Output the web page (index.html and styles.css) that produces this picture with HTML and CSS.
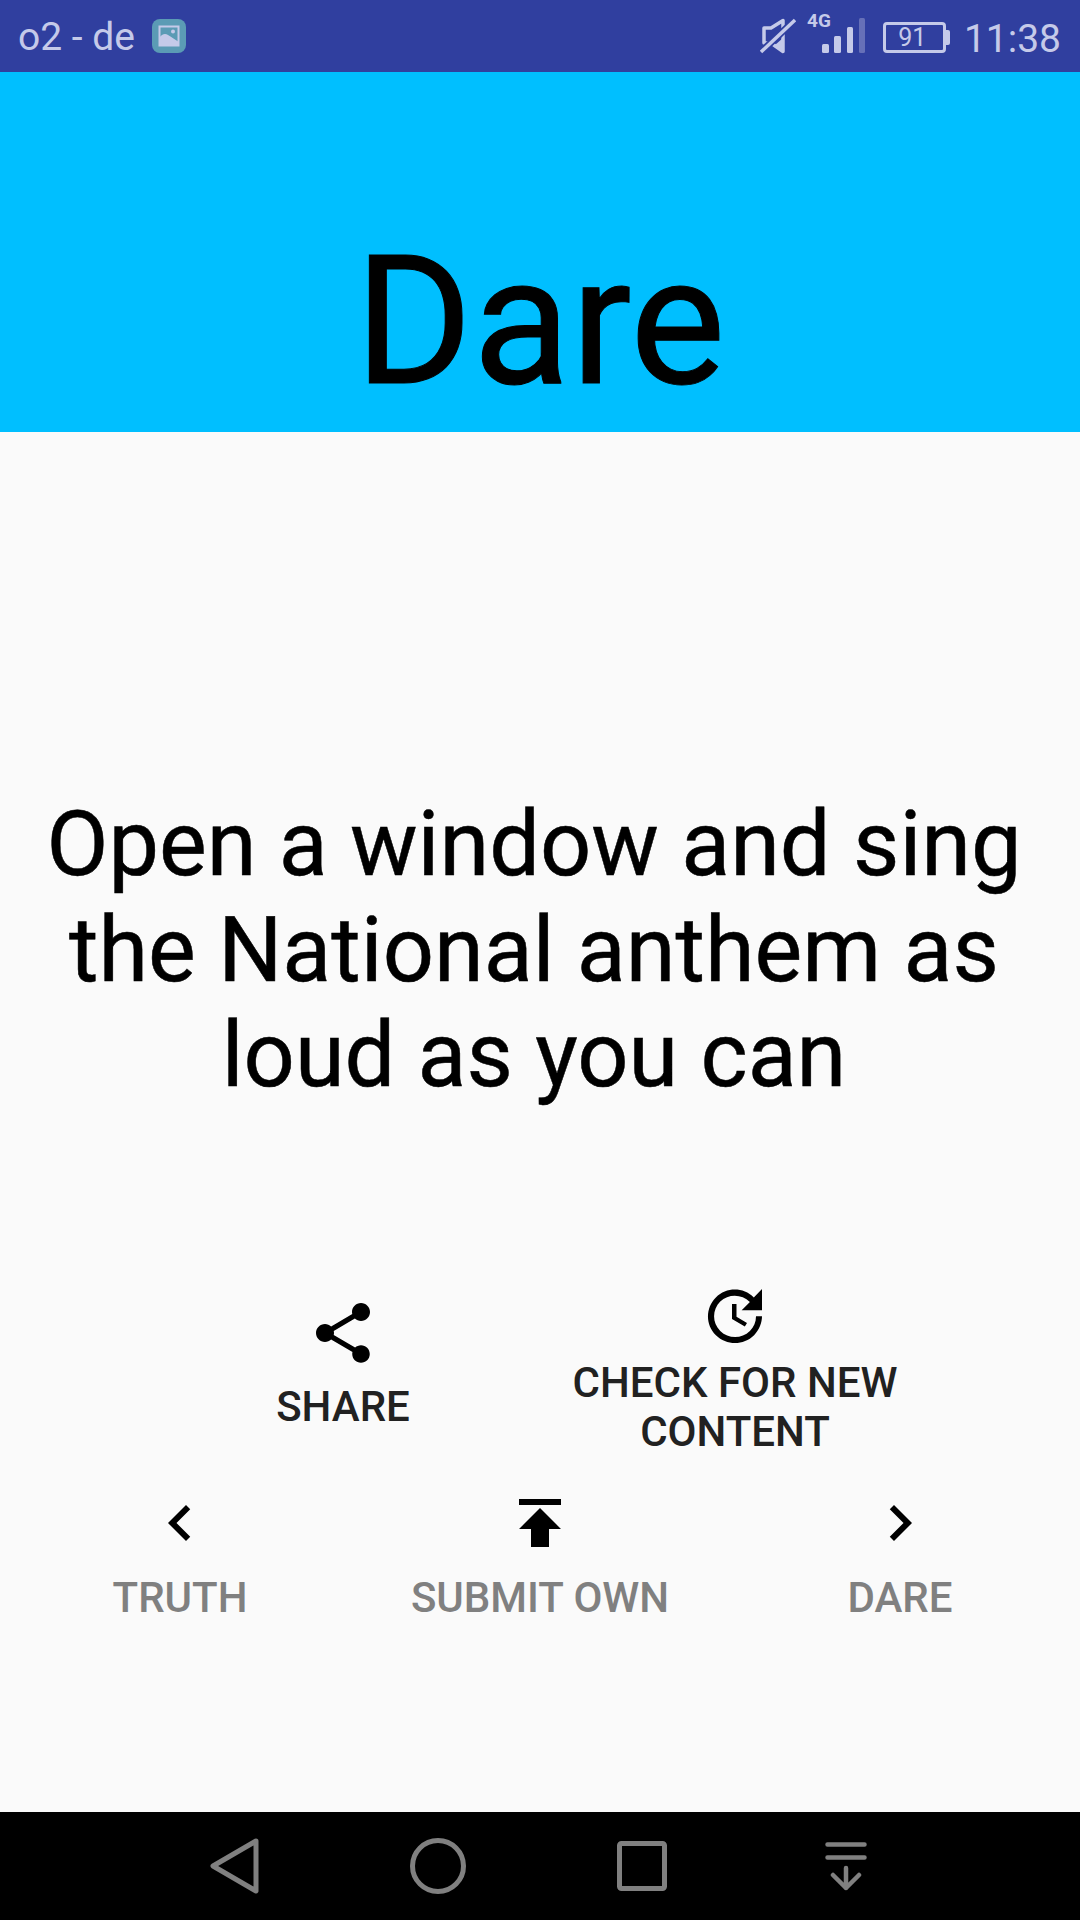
FILE: index.html
```html
<!DOCTYPE html>
<html lang="en">
<head>
  <meta charset="UTF-8" />
  <meta name="viewport" content="width=device-width, initial-scale=1.0"/>
  <title>Dare</title>
  <link rel="stylesheet" href="styles.css">
</head>
<body>
  <div class="status-bar">
    <div class="status-left">
      <span class="carrier">o2 - de</span>
      <svg class="gallery-icon" viewBox="0 0 34 34" width="34" height="34">
        <rect width="34" height="34" rx="8" fill="#5b9bb5"/>
        <rect x="7.5" y="7.5" width="19" height="19" fill="none" stroke="#c5cae9" stroke-width="2"/>
        <path d="M7 27v-8c3-4 6-5 9-3 4 2 7 5 11 7v4z" fill="#c5cae9"/>
        <circle cx="21" cy="12.5" r="2" fill="#c5cae9"/>
      </svg>
    </div>
    <div class="status-right">
      <svg class="mute-icon" viewBox="0 0 36 36" width="36" height="36">
        <path d="M4 10h7L23 2.5v31L11 25H4z" fill="none" stroke="#c5cae9" stroke-width="3.5" stroke-linejoin="round"/>
        <path d="M15 27l8 6V20z" fill="#c5cae9"/>
        <path d="M1 34L35 2" stroke="#303f9f" stroke-width="7"/>
        <path d="M1 34L35 2" stroke="#c5cae9" stroke-width="3.5"/>
      </svg>
      <svg class="signal-icon" viewBox="0 0 60 40" width="60" height="40">
        <text class="network-type" x="0" y="11">4G</text>
        <rect x="15" y="28" width="7" height="9" rx="1.5" fill="#c5cae9"/>
        <rect x="27" y="20" width="7" height="17" rx="1.5" fill="#c5cae9"/>
        <rect x="40" y="11" width="6" height="26" rx="1.5" fill="#c5cae9"/>
        <rect x="52" y="2" width="6" height="35" rx="1.5" fill="#6670b8"/>
      </svg>
      <div class="battery">
        <div class="battery-body">91</div>
        <div class="battery-nub"></div>
      </div>
      <span class="clock">11:38</span>
    </div>
  </div>

  <div class="header">
    <h1>Dare</h1>
  </div>

  <div class="content">
    <p class="message">Open a window and sing the National anthem as loud as you can</p>

    <div class="actions-top">
      <div class="action share">
        <svg class="icon" viewBox="0 0 24 24"><path d="M18 16.08c-.76 0-1.44.3-1.96.77L8.91 12.7c.05-.23.09-.46.09-.7s-.04-.47-.09-.7l7.05-4.11c.54.5 1.25.81 2.04.81 1.66 0 3-1.34 3-3s-1.34-3-3-3-3 1.34-3 3c0 .24.04.47.09.7L8.04 9.81C7.5 9.31 6.79 9 6 9c-1.66 0-3 1.34-3 3s1.34 3 3 3c.79 0 1.5-.31 2.04-.81l7.12 4.16c-.05.21-.08.43-.08.65 0 1.61 1.31 2.92 2.92 2.92 1.61 0 2.92-1.31 2.92-2.92s-1.31-2.92-2.92-2.92z"/></svg>
        <span class="action-label">SHARE</span>
      </div>
      <div class="action check">
        <svg class="icon" viewBox="0 0 24 24"><path d="M21 10.12h-6.78l2.74-2.82c-2.73-2.7-7.15-2.8-9.88-.1-2.73 2.71-2.73 7.08 0 9.79s7.15 2.71 9.88 0C18.32 15.65 19 14.08 19 12.1h2c0 1.98-.88 4.55-2.64 6.29-3.51 3.48-9.21 3.48-12.72 0-3.5-3.47-3.53-9.11-.02-12.58s9.14-3.47 12.65 0L21 3v7.12zM12.5 8v4.25l3.5 2.08-.72 1.21L11 13V8h1.5z"/></svg>
        <span class="action-label">CHECK FOR NEW<br>CONTENT</span>
      </div>
    </div>

    <div class="actions-bottom">
      <div class="action disabled">
        <svg class="icon" viewBox="0 0 24 24"><path d="M15.41 7.41L14 6l-6 6 6 6 1.41-1.41L10.83 12z"/></svg>
        <span class="action-label">TRUTH</span>
      </div>
      <div class="action disabled">
        <svg class="icon" viewBox="0 0 24 24"><path d="M5 4v2h14V4H5zm0 10h4v6h6v-6h4l-7-7-7 7z"/></svg>
        <span class="action-label">SUBMIT OWN</span>
      </div>
      <div class="action disabled">
        <svg class="icon" viewBox="0 0 24 24"><path d="M10 6L8.59 7.41 13.17 12l-4.58 4.59L10 18l6-6z"/></svg>
        <span class="action-label">DARE</span>
      </div>
    </div>
  </div>

  <div class="nav-bar">
    <svg viewBox="0 0 50 56" width="50" height="56">
      <path d="M46 3L3 28l43 25z" fill="none" stroke="#808080" stroke-width="5" stroke-linejoin="round"/>
    </svg>
    <svg viewBox="0 0 56 56" width="56" height="56">
      <circle cx="28" cy="28" r="25.5" fill="none" stroke="#808080" stroke-width="5"/>
    </svg>
    <svg class="nav-square" viewBox="0 0 50 50" width="50" height="50">
      <rect x="2.5" y="2.5" width="45" height="45" rx="2" fill="none" stroke="#808080" stroke-width="5"/>
    </svg>
    <svg class="nav-menu" viewBox="0 0 42 50" width="42" height="50">
      <path d="M2.5 3.5h37M2.5 16.5h37M21 27v20M8 34l13 13 13-13" fill="none" stroke="#808080" stroke-width="4.5" stroke-linecap="round" stroke-linejoin="round"/>
    </svg>
  </div>
</body>
</html>
```

FILE: styles.css
```css
* {
  box-sizing: border-box;
}

body {
  font-family: Roboto, sans-serif;
  background-color: #fafafa;
  margin: 0;
  width: 1080px;
  height: 1920px;
  display: flex;
  flex-direction: column;
  overflow: hidden;
}

.status-bar {
  height: 72px;
  background-color: #303f9f;
  color: #c5cae9;
  display: flex;
  justify-content: space-between;
  align-items: center;
  padding: 0 19px 0 18px;
}

.status-left,
.status-right {
  display: flex;
  align-items: center;
}

.carrier {
  font-size: 39px;
  margin-top: 2px;
}

.gallery-icon {
  margin-left: 17px;
}

.network-type {
  font-family: Roboto, sans-serif;
  font-size: 19px;
  font-weight: 700;
  fill: #c5cae9;
}

.mute-icon {
  margin-right: 11px;
}

.signal-icon {
  margin-right: 16px;
  overflow: visible;
}

.battery {
  display: flex;
  align-items: center;
  margin-top: 3px;
  margin-right: 14px;
}

.battery-body {
  width: 63px;
  height: 31px;
  border: 3px solid #c5cae9;
  border-radius: 4px;
  padding-right: 4px;
  font-size: 25px;
  line-height: 25px;
  text-align: center;
}

.battery-nub {
  width: 4px;
  height: 15px;
  background-color: #c5cae9;
  border-radius: 0 2px 2px 0;
}

.clock {
  font-size: 39px;
  margin-top: 6px;
}

.header {
  height: 360px;
  background-color: #00bfff;
  display: flex;
  justify-content: center;
  align-items: flex-end;
  padding-bottom: 5px;
}

h1 {
  margin: 0;
  font-size: 180px;
  font-weight: 400;
  line-height: 211px;
  color: #000;
  -webkit-text-stroke: 1px #000;
}

.content {
  flex: 1;
  display: flex;
  flex-direction: column;
}

.message {
  margin: 360px 0 0;
  padding: 0 36px 0 24px;
  font-size: 90px;
  line-height: 105.5px;
  text-align: center;
  color: #000;
  -webkit-text-stroke: 0.5px #000;
}

.actions-top {
  display: flex;
  justify-content: center;
  align-items: flex-start;
  margin-top: 171.5px;
}

.actions-bottom {
  display: grid;
  grid-template-columns: repeat(3, 1fr);
  margin-top: 31px;
}

.action {
  display: flex;
  flex-direction: column;
  align-items: center;
  text-align: center;
  color: #212121;
}

.action.disabled {
  color: #808080;
}

.icon {
  width: 72px;
  height: 72px;
  fill: #000;
}

.action-label {
  margin-top: 14px;
  font-size: 42px;
  font-weight: 500;
  line-height: 49px;
}

.action.share {
  width: 390px;
  margin-top: 17px;
}

.action.share .action-label {
  margin-top: 13px;
}

.action.check {
  width: 394px;
}

.action.check .action-label {
  margin-top: 6px;
}

.nav-bar {
  height: 108px;
  background-color: #000;
  display: flex;
  align-items: center;
  gap: 150px;
  padding-left: 210px;
}

.nav-square {
  margin-left: 1px;
}

.nav-menu {
  margin-left: 8px;
}
```
